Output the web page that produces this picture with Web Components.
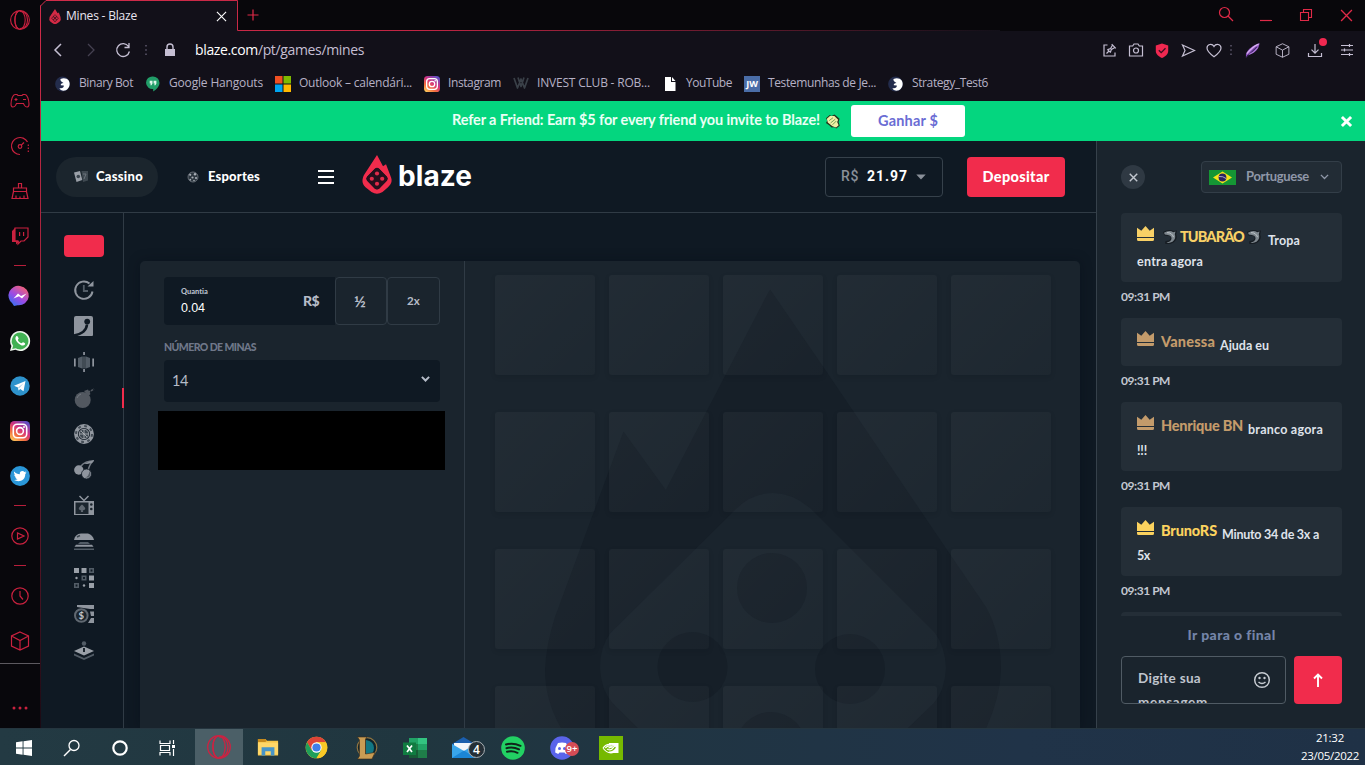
<!DOCTYPE html>
<html lang="pt">
<head>
<meta charset="utf-8">
<title>Mines - Blaze</title>
<style>
html,body{margin:0;height:100%;overflow:hidden;background:#0f1923}
body{font-family:"Lato","Open Sans",sans-serif}
</style>
</head>
<body>
<desk-top></desk-top>
<script>
const ICONS = {
opera:[20,20,'<g fill="none" stroke="currentColor" stroke-width="1.1"><circle cx="10" cy="10" r="9.4"/><ellipse cx="10" cy="10" rx="5.2" ry="9.2"/><path d="M8 1.5C4 4 4 16 8 18.500M10 1.500c6 0 7.500 4 7.500 8.500s-1.500 8.500-7.500 8.500"/></g>'],
gamepad:[20,16,'<g fill="none" stroke="currentColor" stroke-width="1.1"><path d="M5 1.500h2l1 1h4l1-1h2c2 0 4 5 4 9.500 0 4-3 3.500-4.500 1.500l-1-2h-7l-1 2C4 14.500 1 15 1 11 1 6.500 3 1.500 5 1.500z"/><path d="M6 5v3M4.500 6.500h3M13 6.500h3"/></g>'],
gauge:[20,20,'<g fill="none" stroke="currentColor" stroke-width="1.2"><path d="M10 18.500a8.500 8.500 0 1 1 7.500-12.500"/><path d="M18.300 8.500v8" stroke-dasharray="1.500 1.500"/><circle cx="10" cy="10.500" r="1.800"/><path d="M11.300 9.200L14 6.500"/></g>'],
broom:[18,18,'<path d="M7.500 6V1.500h3V6M2.500 9.500V6h13v3.500M2.500 9.500L1 16.500h16l-1.500-7zM5 16.500v-3M9 16.500v-2M13 16.500v-3" fill="none" stroke="currentColor" stroke-width="1.200"/>'],
twitch:[18,18,'<path d="M4 1h13v9l-4 4h-3l-3 3v-3H4z" fill="none" stroke="currentColor" stroke-width="1.200"/><path d="M4 1L1 4v11h4v2.500l3-3-1-1H4zM8 5h1.200v4H8zM12 5h1.200v4H12z" fill="currentColor"/>'],
messenger:[20,20,'<defs><linearGradient id="g" x1="0" y1="1" x2=".7" y2="0"><stop offset="0" stop-color="#1b7cf5"/><stop offset=".5" stop-color="#9a4be6"/><stop offset="1" stop-color="#f0607a"/></linearGradient></defs><path d="M10 0a10 9.600 0 1 1-2.500 19.200L4 20l-2-3A9.700 9.700 0 0 1 10 0z" fill="url(#g)"/><path d="M3.500 12.500L8 7.500l3 2.500 5.500-2.500-4.500 5-3-2.300z" fill="#fff"/>'],
whatsapp:[20,20,'<path d="M10 0a10 10 0 1 1-4.600 18.800L0 20l1.400-5A10 10 0 0 1 10 0z" fill="#eef7ee"/><path d="M10 1.600a8.400 8.400 0 1 1-4.300 15.600L2.200 18l1-3.300A8.400 8.400 0 0 1 10 1.600z" fill="#41b153"/><path d="M6.500 5c-2 1.500-1 4.500 1.500 7s5.500 3.500 7 1.500c.6-1-.2-1.500-1.800-2.200-.8-.3-1 .9-1.700.9C10 12 8 10 7.900 8.900c0-.6 1-.9.700-1.600C8 5.500 7.500 4.600 6.500 5z" fill="#fff"/>'],
telegram:[20,20,'<circle cx="10" cy="10" r="9.700" fill="#2e92cc"/><path d="M4 9.800L15.500 5l-2 10.300-3.300-2.400-1.700 1.700-.5-3.100z" fill="#fff"/><path d="M8 11.500l5.500-4.300-4.300 5z" fill="#a9cbe0"/>'],
insta:[20,20,'<defs><linearGradient id="g" x1=".1" y1="1" x2=".8" y2="0"><stop offset="0" stop-color="#ffd25e"/><stop offset=".3" stop-color="#f2703f"/><stop offset=".6" stop-color="#d3317f"/><stop offset="1" stop-color="#5a50c8"/></linearGradient></defs><rect width="20" height="20" rx="4.500" fill="url(#g)"/><g fill="none" stroke="#fff" stroke-width="1.600"><rect x="3.300" y="3.300" width="13.400" height="13.400" rx="3.800"/><circle cx="10" cy="10" r="3.400"/></g><circle cx="14" cy="6" r="1" fill="#fff"/>'],
twitter:[20,20,'<circle cx="10" cy="10" r="9.900" fill="#2a96d8"/><path d="M4.200 5.500c1.500 1.800 3.300 2.600 5.600 2.700C9.300 5 13 4 14.500 6l1.700-.6-.9 1.600 1.400-.4-1.400 1.500c0 7-6.800 8.500-11.300 6 1.500.1 2.700-.2 3.700-1-1.300-.2-2.100-.8-2.500-1.900h1C4.800 10.500 4.200 9.600 4.200 8.400l1.100.3C4.100 7.800 3.700 6.600 4.200 5.500z" fill="#fff"/>'],
play:[18,18,'<g fill="none" stroke="currentColor" stroke-width="1.200"><circle cx="9" cy="9" r="8.200"/><path d="M6.500 6v6l6.500-3z"/></g>'],
clock:[18,18,'<g fill="none" stroke="currentColor" stroke-width="1.200"><circle cx="9" cy="9" r="8.200"/><path d="M9 4v5l3 3.500"/></g>'],
cube:[20,20,'<path d="M10 1l8.500 4v10L10 19l-8.500-4V5zM1.500 5L10 9.500 18.500 5M10 9.500V19" fill="none" stroke="currentColor" stroke-width="1.200"/>'],
dots3:[16,4,'<g fill="currentColor"><circle cx="2" cy="2" r="1.500"/><circle cx="8" cy="2" r="1.500"/><circle cx="14" cy="2" r="1.500"/></g>'],
flame:[30,40,'<path fill-rule="evenodd" fill="#f12c4c" d="M15 0l6 11.500L24 9.500l4.500 12C31 27 29 30 26 33l-5.500 5q-5.500 3.500-11 0L3.500 33C-.5 29 0 25 2 20.500z M12.800 14q2.200-1.600 4.400 0l7.800 8.300q1.600 2 0 4L17.200 34.500q-2.200 1.600-4.400 0L5 26.300q-1.600-2 0-4z"/><path fill="#250f1c" d="M13 14q2-1.400 4 0l7.800 8.400q1.400 1.800 0 3.600L17 34.400q-2 1.400-4 0L5.200 26q-1.400-1.800 0-3.600z"/><g fill="#e02b4a"><circle cx="15" cy="19" r="2.100"/><circle cx="15" cy="29.500" r="2.100"/><circle cx="9.800" cy="24.300" r="2.100"/><circle cx="20.200" cy="24.300" r="2.100"/></g>'],
favicon:[12,15,'<path fill="#d42a45" d="M6 0l2.600 4.300 1.200-.8 1.700 4.500q1 3-1 4.800L8 14.500q-2 1-4 0L1.500 12.800Q-.5 11 .6 8z"/><path fill="#4a1423" d="M6 5.200l3.800 4L6 13.200l-3.800-4z"/><g fill="#d42a45"><circle cx="6" cy="7.300" r="1"/><circle cx="6" cy="11" r="1"/><circle cx="4.200" cy="9.200" r="1"/><circle cx="7.800" cy="9.200" r="1"/></g>'],
x:[12,12,'<path d="M1 1l10 10M11 1L1 11" stroke="currentColor" fill="none" stroke-width="var(--sw,1.200)"/>'],
plus:[12,12,'<path d="M6 .5v11M.5 6h11" stroke="currentColor" stroke-width="1.200"/>'],
bar:[12,12,'<path d="M0 11.500h12" stroke="currentColor" stroke-width="1.200"/>'],
search:[16,16,'<g fill="none" stroke="currentColor" stroke-width="1.200"><circle cx="6.500" cy="6.500" r="5"/><path d="M10 10l5 5"/></g>'],
restore:[14,14,'<path d="M1.500 4.500h8v8h-8zM4.500 4.500v-3h8v8h-3" fill="none" stroke="currentColor" stroke-width="1.100"/>'],
back:[10,14,'<path d="M8 1L2 7l6 6" fill="none" stroke="currentColor" stroke-width="1.500"/>'],
fwd:[10,14,'<path d="M2 1l6 6-6 6" fill="none" stroke="currentColor" stroke-width="1.300"/>'],
reload:[16,16,'<path d="M13.500 4.500A6.400 6.400 0 1 0 14.400 9.500M14 1v4.500H9.500" fill="none" stroke="currentColor" stroke-width="1.300"/>'],
vdots:[2,12,'<path d="M0 1h2v1.500H0zM0 5.200h2v1.500H0zM0 9.500h2V11H0z" fill="#4b4658"/>'],
lock:[12,14,'<path d="M1 6h10v7H1z" fill="currentColor"/><path d="M3 6V4a3 3 0 0 1 6 0v2" fill="none" stroke="currentColor" stroke-width="1.400"/>'],
pin:[14,14,'<path d="M4.500 2H1v11h11V9.500" fill="none" stroke="currentColor" stroke-width="1.200"/><path d="M3.500 10.500L6 8M4.300 6.300l3.400 3.400M4.800 6.600L7.600 5.600 9.300 2.500M7.400 9.200l1-2.800 3.100-1.700M8.700 1.200l4.100 4.100" fill="none" stroke="currentColor" stroke-width="1.200"/>'],
camera:[16,14,'<g fill="none" stroke="currentColor" stroke-width="1.200"><path d="M1.500 3h3.200L6 1h4l1.300 2h3.200v10h-13z"/><circle cx="8" cy="7.500" r="2.500"/></g>'],
shield:[14,15,'<path d="M7 .5l6.200 2v5.500c0 3.500-3 5.500-6.200 7-3.200-1.500-6.200-3.500-6.200-7V2.500z" fill="#f02850"/><path d="M3.800 7.300l2.400 2.400 4.300-4.400" fill="none" stroke="#3a0d20" stroke-width="1.300"/>'],
send:[15,13,'<path d="M1.500 1L13.500 6.500 1.500 12l2.500-5.500z" fill="none" stroke="currentColor" stroke-width="1.200"/>'],
heart:[16,15,'<path d="M8 13.800C3 10 1 7.500 1 5c0-3.800 5-5 7-1.500C10 0 15 1.200 15 5c0 2.500-2 5-7 8.800z" fill="none" stroke="currentColor" stroke-width="1.200"/>'],
feather:[16,18,'<path d="M1 13C3 7 9 3.500 15.500 1c-.3 6-5 11.500-13 13L1 17z" fill="#8d55bd"/><path d="M2 12.500Q8 5 14.500 2.300" stroke="#d9b2f2" stroke-width="1.300" fill="none"/><path d="M1.500 16L12.500 5.500" stroke="#3d2260" stroke-width="1.100" fill="none"/><path d="M4.500 13.200Q10 11.500 13.500 6" stroke="#b583dc" stroke-width="1" fill="none"/>'],
download:[16,16,'<path d="M1.500 11v3.500h13V11M8 2v9M4.500 7.700L8 11.200l3.500-3.500" fill="none" stroke="currentColor" stroke-width="1.200"/>'],
sliders:[14,14,'<path d="M1 2.500h12M1 7h12M1 11.500h12M9.500 1v3M4.500 5.500v3M9.500 10v3" fill="none" stroke="currentColor" stroke-width="1.200"/>'],
binary:[16,16,'<circle cx="7.500" cy="8" r="7.400" fill="#232c4c"/><path d="M5.500 3C8.500 1.500 12 2.200 13.700 4.500 16 8 14 13.500 10 14.600 7.500 15.200 5 14 4.500 12c2.500.6 4.500-.3 4.300-2.500L5.800 9.200C5.500 8 6.500 7.200 8.500 7 7.500 6 5 5.500 5.500 3z" fill="#fff"/>'],
hangouts:[14,16,'<path d="M7 .5a6.500 6.500 0 0 1 6.500 6.300c0 4-3.500 7-6.300 8.700v-2.500A6.300 6.300 0 1 1 7 .5z" fill="#219d68"/><path d="M3.700 4.800h2.800v2.800L5.500 9.200H4.300l.6-1.600H3.700zM7.600 4.800h2.800v2.800L9.400 9.200H8.200l.6-1.600H7.600z" fill="#dff5ea"/>'],
outlook:[16,16,'<path fill="#f05022" d="M0 0h7.500v7.500H0z"/><path fill="#7fba00" d="M8.500 0H16v7.500H8.500z"/><path fill="#00a4ef" d="M0 8.500h7.500V16H0z"/><path fill="#ffb900" d="M8.500 8.500H16V16H8.500z"/>'],
wletter:[16,14,'<path d="M1 2l3.500 10L8 3l3.500 9L15 2M5 1.500l3 9 3-9" fill="none" stroke="#3a4048" stroke-width="1.700" stroke-linejoin="round"/>'],
doc:[16,16,'<path d="M3 1h6v5h4.500v9H3z" fill="#fff"/><path d="M10 1l3.500 4H10z" fill="#fff"/>'],
money:[16,16,'<path d="M1 4.500L5 1l2 1 3-1.500 2.500 2L15.500 5l-1 3.500 1.200 4L12 15.500 10 14l-3 .5L4.500 12 1 9.500 2.500 7z" fill="#26331c"/><path d="M2 5l3.300-2.800 4.700-.2L14 6l-1 2.500 1.500 3.500-2.700 2.300-3.800-1.300-5-4z" fill="#f1f0a5"/><path d="M4.500 7l4-3M6 9.500l5-4M8 11.500l4-4" stroke="#6c9a52" stroke-width="1"/>'],
cards:[14,12,'<path d="M0 1.500L6 0l2.300 9L2.500 11z" fill="#9aa0a8"/><circle cx="4.300" cy="5.500" r="1.800" fill="#39434c"/><path d="M7.500 0H14v9.500L9 11z" fill="#3f4951"/><path d="M9 3h3l-2 5" stroke="#6c747c" fill="none"/>'],
ball:[12,12,'<circle cx="6" cy="6" r="5" fill="#2c363f" stroke="#6b727b" stroke-width=".9"/><g fill="#a8adb5"><circle cx="3.200" cy="3.800" r="1.100"/><circle cx="8" cy="3.300" r="1.200"/><circle cx="5.500" cy="6.500" r="1.100"/><circle cx="3.300" cy="8.700" r=".9"/><circle cx="9" cy="7" r="1.100"/><circle cx="7" cy="9.500" r=".8"/></g>'],
burger:[16,16,'<path d="M0 1h16v2H0zM0 7h16v2H0zM0 13h16v2H0z" fill="#fff"/>'],
tri:[10,6,'<path d="M.3.500h9.400L5 5.500z" fill="#8a9099"/>'],
chev:[10,6,'<path d="M1 1l4 4 4-4" fill="none" stroke="currentColor" stroke-width="var(--sw,1.200)"/>'],
recent:[20,20,'<path d="M18.500 11.500A8.700 8.700 0 1 1 15.500 3.500" fill="none" stroke="#8f959e" stroke-width="1.900"/><path d="M13.500 6.500h6V1z" fill="#8f959e"/><path d="M9.800 5v6H14" stroke="#525c66" stroke-width="1.800" fill="none"/>'],
crash:[20,20,'<path d="M0 2q0-2 2-2h15q2 0 2 2v17q0 1-1 1H0z" fill="#8f959e"/><path d="M0 19.500C8 18 12.500 14 13 8.500" fill="none" stroke="#0f1923" stroke-width="2.600"/><circle cx="13.200" cy="5.600" r="2.900" fill="#0f1923"/>'],
double:[20,20,'<path d="M0 6.500h1.700v8H0zM18.300 6.500H20v8h-1.700zM9.200 0h1.700v3H9.200zM9.200 17h1.700v3H9.200z" fill="#8f959e"/><path d="M4 6l4-1.500v12L4 15zM12 4.500L16 6v9l-4 1.500z" fill="#525c66"/><path d="M8 4.500h4v12H8z" fill="#414b54"/>'],
bomb:[20,20,'<circle cx="8.700" cy="12" r="8" fill="#525860"/><path d="M10 3l4-1.500L16.500 6l-2 2z" fill="#525860"/><path d="M14 4.500L20 1" stroke="#525860" stroke-width="1.600" stroke-dasharray="2.500 .8"/><path d="M3 10q1-3 4-4" stroke="#737981" fill="none"/>'],
roulette:[20,20,'<circle cx="10" cy="10" r="8" fill="none" stroke="#9399a1" stroke-width="3.800"/><circle cx="10" cy="10" r="8" fill="none" stroke="#454e57" stroke-width="2" stroke-dasharray="2.800 3.480"/><circle cx="10" cy="10" r="4.800" fill="#3d4750" stroke="#9399a1"/><path d="M10 5.200v9.600M5.200 10h9.600M7 7l6 6" stroke="#b5b9be" stroke-width=".8"/>'],
cherry:[20,20,'<path d="M7 6Q11 1 20 .8M14 11Q15 5 19 1" fill="none" stroke="#737a83" stroke-width="1.500"/><path d="M10 3.500L20 0l-2 3-5 1z" fill="#8f959e"/><circle cx="4.800" cy="10" r="4.700" fill="#8f959e"/><circle cx="12.500" cy="14" r="5" fill="#8f959e" stroke="#0f1923" stroke-width=".8"/><path d="M15.500 11q2 3-.5 6.500h-4q4-1 4.500-6.500z" fill="#545c65"/>'],
tv:[20,20,'<path d="M5.500 0L10 4.500 14.500 0" fill="none" stroke="#8f959e" stroke-width="1.500"/><path d="M0 5h20v14H0z" fill="#8f959e"/><path d="M1.500 6.500h13V18h-13z" fill="#1b252e"/><circle cx="17.300" cy="8.500" r="1.300" fill="#1b252e"/><circle cx="17.300" cy="13" r="1.300" fill="#1b252e"/><path d="M8 8.500q6 5 .8 6l.4 1.500H6.800l.4-1.500Q2 13.500 8 8.500z" fill="#606871"/>'],
air:[20,20,'<path d="M0 8Q1 2 7 1.500h7Q19 3 20 8z" fill="#8f959e"/><path d="M3 5l3-1.500" stroke="#3a444d" stroke-width="1.500"/><path d="M6 10h8l2 2H4z" fill="#525c66"/><path d="M2 12.800h16l1.500 2H.5z" fill="#8f959e"/><path d="M0 16.500h20V18H0z" fill="#525c66"/>'],
keno:[20,20,'<g fill="#9aa0a8"><path d="M0 0h5v5H0zM7.500 0h5v5h-5zM15 7.500h5v5h-5zM15 15h5v5h-5z"/><circle cx="2.500" cy="10" r="1.200"/><circle cx="10" cy="17.500" r="1.200"/></g><g fill="none" stroke="#525c66" stroke-width="1.600"><path d="M15.800.8h3.400v3.400h-3.400zM8.300 8.300h3.400v3.400H8.300zM.8 15.800h3.400v3.400H.8z"/></g>'],
coins:[20,20,'<path d="M3 1h17v4h-4L3 3zM16 7.500h4v4.500h-3zM17 14h3v5h-6z" fill="#8f959e"/><circle cx="7.300" cy="11.500" r="6.300" fill="#1b252e" stroke="#606871" stroke-width="2"/>','$'],
joy:[20,20,'<circle cx="10" cy="3.500" r="2.200" fill="#525c66"/><path d="M10 6.500L20 11 10 15.500 0 11z" fill="#9aa0a8"/><path d="M9 8h2v4H9z" fill="#1b252e"/><path d="M0 13.500L10 18l10-4.500v2L10 20 0 15.500z" fill="#525c66"/>'],
crown:[17,15,'<path d="M0 1.800l4.300 3L8.500 0l4.200 4.800 4.300-3V11H0zM0 12h17v1.500q0 1.500-1.500 1.500h-14Q0 15 0 13.500z" fill="currentColor"/>'],
shark:[14,14,'<path d="M0 2Q6-1.500 10.500 1L14 .5l-.8 4Q15 9 10.500 12.500 6 15 2 13.500l.5-2.500L6 10.500Q9 8 6.500 6L1.500 5.500z" fill="#161c22"/><path d="M1 2.800Q6-.3 10.300 2.200l2.200-.6-.7 2.700Q13.500 8.500 9.500 11.800 6.500 13.500 3.500 12.700q4.500-1.200 5-4Q9 5 1.800 4.500z" fill="#7d868d"/><path d="M4 2.600q5 0 6.500 4.500" stroke="#cdd2d6" fill="none" stroke-width=".8"/>'],
flag:[27,15,'<path d="M0 0h27v15H0z" fill="#159634"/><path d="M13.500 1.500L23 7.500l-9.500 6-9.500-6z" fill="#f6e31b"/><circle cx="13.500" cy="7.500" r="3.900" fill="#2b2360"/><path d="M10 6.500q4-.5 7 2" stroke="#c8cbe0" fill="none" stroke-width=".8"/>'],
smile:[18,18,'<g fill="none" stroke="#c5cad0" stroke-width="1.500"><circle cx="9" cy="9" r="7.300"/><path d="M5.500 11q3.500 3 7 0"/></g><circle cx="6.500" cy="7" r="1.200" fill="#c5cad0"/><circle cx="11.500" cy="7" r="1.200" fill="#c5cad0"/>'],
up:[10,14,'<path d="M5 14V2.500M1 5.500l4-4 4 4" fill="none" stroke="#fff" stroke-width="1.900"/>'],
win:[16,16,'<path d="M0 2.300L6.600 1.300v6.300H0zM7.500 1.200L16 0v7.600H7.500zM0 8.500h6.600v6.300L0 13.800zM7.500 8.500H16V16l-8.500-1.200z" fill="#fff"/>'],
find:[18,18,'<circle cx="11" cy="6.500" r="5" fill="none" stroke="#fff" stroke-width="1.300"/><path d="M7.500 10.500L1 17" stroke="#fff" stroke-width="1.500"/>'],
ring:[16,16,'<circle cx="8" cy="8" r="6.700" fill="none" stroke="#fff" stroke-width="2.200"/>'],
task:[18,16,'<path d="M1 .5v3h10v-3M1 15.500v-3h10v3M1.500 5.500h9v5h-9zM14.500 0v4M14.500 9v7" fill="none" stroke="#fff" stroke-width="1.200"/><path d="M13 5h3v3h-3z" fill="#fff"/>'],
folder:[24,20,'<path d="M1 1h8l2 2h12v16H1z" fill="#f6c64a"/><path d="M1 1h8l2 2-2 1.500H1z" fill="#c68a1d"/><path d="M1 5h22v13H1z" fill="#ffd768"/><path d="M5 19v-9h14v9h-4v-4.500H9V19z" fill="#4795c8"/>'],
chrome:[24,24,'<circle cx="12" cy="12" r="11.300" fill="#f9c926"/><path d="M2.200 6.400A11.300 11.300 0 0 1 21.800 6.400H12L7 15z" fill="#dd4437"/><path d="M2.200 6.400A11.300 11.300 0 0 0 12 23.300l5-8.500-10 0z" fill="#1f9f5a"/><path d="M21.800 6.400H12l5 8.400-5 8.500A11.300 11.300 0 0 0 21.800 6.400z" fill="#f9c926"/><circle cx="12" cy="12" r="5.400" fill="#fff"/><circle cx="12" cy="12" r="4.300" fill="#3f7fe8"/>'],
lol:[24,24,'<circle cx="13" cy="11.500" r="9.800" fill="#10252d" stroke="#8f7341" stroke-width="1.200"/><path d="M12 4q8 1.500 8 8 0 3-2 6h-6z" fill="#127783"/><path d="M3.500 1H13l-1.500 2v15l9.500-1.500-3 6.500H3.500l2-3V4z" fill="#c89c54" stroke="#3a2a16" stroke-width=".6"/>'],
excel:[24,22,'<path d="M6 1h18v20H6z" fill="#1f7d49"/><path d="M6 1h9v6H6z" fill="#21a366"/><path d="M15 1h9v6h-9z" fill="#33c481"/><path d="M15 7h9v6h-9z" fill="#21a366"/><path d="M6 13h9v8H6z" fill="#185c37"/><path d="M0 5.500h13v12.500H0z" fill="#107c41"/><path d="M4 8.500l5 6.500M9 8.500L4 15" stroke="#fff" stroke-width="1.700"/>'],
mail:[26,24,'<path d="M1 8L12.500 1 24 8v14H1z" fill="#1b5fae"/><path d="M3 7h19v10H3z" fill="#f2f6fb"/><path d="M1 8l12 7L24 8v14H1z" fill="#39a5ea"/><path d="M1 22L13 14.500 24 22z" fill="#1b86d6"/>'],
spotify:[24,24,'<circle cx="12" cy="12" r="11.800" fill="#22d163"/><path d="M5 8.500q7-2.200 14.500 1.300M5.500 12.200q6.500-1.800 12.500 1.200M6 15.800q5.500-1.500 10.500 1" fill="none" stroke="#10251a" stroke-width="2" stroke-linecap="round"/>'],
discord:[24,24,'<circle cx="12" cy="12" r="11.800" fill="#5a64ea"/><path d="M8 7q4-1 8 0l2.500 5 .3 4.500-3 1.500-1.300-1.500h-5L8.200 18l-3-1.500.3-4.500z" fill="#fff"/><circle cx="9.500" cy="12.500" r="1.500" fill="#5a64ea"/><circle cx="14.500" cy="12.500" r="1.500" fill="#5a64ea"/>'],
nvidia:[24,24,'<path d="M0 0h24v24H0z" fill="#76b900"/><path d="M10 7h9.500v10H10z" fill="#fff"/><path d="M10 8.500q4.500-.3 7 3-3 4.300-7 4z" fill="#76b900"/><path d="M4 12Q9 5.500 16.500 11M4 12q4 6 10.500 4.500M6.300 12Q10 8 14.500 11.500 12 15.500 8 13M9.500 12.300q2-1.800 3.200-.3" fill="none" stroke="#fff" stroke-width="1.200"/>']
};
ICONS.insta16 = [16,16,`<g transform="scale(.8)">${ICONS.insta[2]}</g>`];

const def = (name, html, init) => customElements.define(name, class extends HTMLElement {
  connectedCallback(){
    if (this.shadowRoot) return;
    const root = this.attachShadow({mode:'open'});
    const t = document.createElement('template');
    t.innerHTML = typeof html === 'function' ? html(this) : html;
    root.append(t.content.cloneNode(true));
    if (init) init(this, root);
  }
});

def('x-icon', el => {
  const [w,h,body,label] = ICONS[el.getAttribute('name')];
  const W = +el.getAttribute('w') || w, H = +el.getAttribute('h') || h * W / w;
  return `<style>:host{display:inline-flex;flex:none;align-items:center;justify-content:center;box-sizing:border-box}svg{display:block;overflow:visible}</style>
  <svg width="${W}" height="${H}" viewBox="0 0 ${w} ${h}" preserveAspectRatio="none">${body}${label?`<text x="7.300" y="15" text-anchor="middle" font-family="Lato" font-weight="700" font-size="9.500" fill="#c5c8cd">${label}</text>`:''}</svg>`;
});

/* Single-line label: tracks its letters so that the text fills the width given in "w". */
def('x-label', `<style>:host{display:inline-block;flex:none;white-space:pre;line-height:1.2}</style><span><slot></slot></span>`, (el, root) => {
  const w = +el.getAttribute('w'), s = root.querySelector('span');
  if (!w) return;
  el.style.width = w + 'px';
  const n = el.textContent.length;
  s.style.letterSpacing = ((w - s.getBoundingClientRect().width) / n).toFixed(3) + 'px';
});

def('side-bar', `<style>
:host{display:flex;flex-direction:column;width:41px;height:728px;background:#08070c;color:#c9213f;box-sizing:border-box}
x-icon{height:45px;width:40px}
.top{height:40px;margin-bottom:38px}
i{display:block;flex:none;width:12px;height:1px;margin:7px 14px;background:#b81e3b}
hr{margin:0;border:0;flex:none;width:40px;height:1px;background:#5c5960}
.more{height:64px;padding-top:24px}
</style>
<x-icon class="top" name="opera"></x-icon>
<x-icon name="gamepad"></x-icon><x-icon name="gauge"></x-icon><x-icon name="broom"></x-icon><x-icon name="twitch"></x-icon>
<i></i>
<x-icon name="messenger"></x-icon><x-icon name="whatsapp"></x-icon><x-icon name="telegram"></x-icon><x-icon name="insta"></x-icon><x-icon name="twitter"></x-icon>
<i></i><x-icon name="play"></x-icon><i></i>
<x-icon name="clock"></x-icon><x-icon name="cube"></x-icon>
<hr><x-icon class="more" name="dots3"></x-icon>`);

def('tab-strip', `<style>
:host{display:flex;height:31px;background:#08070b;font:12px "Open Sans","Noto Sans",sans-serif;color:#e02a48}
.tab{display:flex;align-items:center;width:197px;height:31px;box-sizing:border-box;padding:1px 0 0 8px;background:#121019;color:#e8e4f0;clip-path:polygon(5px 0,100% 0,100% 100%,0 100%,0 5px)}
.tab x-label{margin-left:5px}
.tab .c{margin-left:79px;color:#fff}
.sp{flex:1}
.b{width:40px;height:30px}
.e{margin-right:-1px}
.p{width:29px;height:30px;padding-left:1px}
</style>
<div class="tab"><x-icon name="favicon" w="12"></x-icon><x-label w="71">Mines - Blaze</x-label><x-icon class="c" name="x" w="11"></x-icon></div>
<x-icon class="p" name="plus"></x-icon><div class="sp"></div>
<x-icon class="b" name="search" style="height:28px"></x-icon><x-icon class="b" name="bar"></x-icon><x-icon class="b" name="restore"></x-icon><x-icon class="b e" name="x" w="13"></x-icon>`);

def('address-bar', `<style>
:host{display:flex;align-items:center;height:38px;background:#121019;color:#c5bfd3;font:14px "Open Sans","Noto Sans",sans-serif}
.sp{flex:1}
b{font-weight:400;color:#fff}
.dl{position:relative;width:40px;display:flex;justify-content:center}
.dl::after{content:"";position:absolute;left:24px;top:-4px;width:8px;height:8px;border-radius:50%;background:#f02850}
</style>
<x-icon name="back" style="width:33px"></x-icon><x-icon name="fwd" style="width:33px;color:#454151"></x-icon><x-icon name="reload" style="width:32px"></x-icon><x-icon name="vdots" style="width:13px"></x-icon><x-icon name="lock" style="width:36px"></x-icon>
<x-label w="169" style="margin-left:7px"><b>blaze.com</b>/pt/games/mines</x-label><div class="sp"></div>
<x-icon name="pin" style="width:26px"></x-icon><x-icon name="camera" style="width:26px"></x-icon><x-icon name="shield" style="width:26px"></x-icon><x-icon name="send" style="width:26px"></x-icon><x-icon name="heart" style="width:26px"></x-icon><x-icon name="vdots" style="width:8px"></x-icon>
<x-icon name="feather" style="width:34px" w="15"></x-icon><x-icon name="cube" w="15" style="width:26px"></x-icon><div class="dl"><x-icon name="download"></x-icon></div><x-icon name="sliders" style="width:24px;margin-right:6px"></x-icon>`);

def('book-mark', el => `<style>:host{display:flex;align-items:center;gap:8px}x-icon{width:16px}.jw{width:16px;height:16px;background:#4a6da7;color:#fff;font:700 9px/16px "Open Sans",sans-serif;text-align:center}</style>
${el.getAttribute('icon')==='jw'?'<span class="jw">JW</span>':`<x-icon name="${el.getAttribute('icon')}"></x-icon>`}<x-label w="${el.getAttribute('w')}">${el.textContent}</x-label>`);

def('bookmark-bar', `<style>:host{display:flex;align-items:center;gap:12px;height:32px;padding:0 0 3px 14px;background:#121019;color:#b6b0c5;font:12px "Open Sans","Noto Sans",sans-serif;box-sizing:border-box}</style>
<book-mark icon="binary" w="54">Binary Bot</book-mark><book-mark icon="hangouts" w="94">Google Hangouts</book-mark><book-mark icon="outlook" w="113">Outlook – calendári...</book-mark><book-mark icon="insta16" w="53">Instagram</book-mark><book-mark icon="wletter" w="113">INVEST CLUB - ROB...</book-mark><book-mark icon="doc" w="46">YouTube</book-mark><book-mark icon="jw" w="108">Testemunhas de Je...</book-mark><book-mark icon="binary" w="76">Strategy_Test6</book-mark>`);

def('promo-banner', `<style>
:host{display:flex;align-items:center;height:40px;background:#04d67f;color:#eafff5;font-weight:700;padding-left:411px;box-sizing:border-box}
a{display:flex;align-items:center;justify-content:center;width:114px;height:32px;border-radius:3px;background:#fff;color:#6a6cd4;margin-left:11px;font-size:14.500px}
.sp{flex:1}
</style><x-label w="368" style="font-size:14.500px;margin-top:-2px">Refer a Friend: Earn $5 for every friend you invite to Blaze!</x-label><x-icon name="money" w="15" style="margin-left:5px"></x-icon><a><x-label w="60">Ganhar $</x-label></a><div class="sp"></div><x-icon name="x" w="11" style="--sw:3.200;margin-right:13px;color:#fff"></x-icon>`);

def('site-header', `<style>
:host{display:flex;align-items:center;height:72px;box-sizing:border-box;border-bottom:1px solid #303b45;padding:0 31px 0 15px;color:#fff;font-weight:900}
.pill{display:flex;align-items:center;gap:8px;box-sizing:border-box;width:102px;height:40px;border-radius:20px;background:#1b252d;padding-left:18px;font-size:13px}
.esp{display:flex;align-items:center;gap:9px;margin-left:29px;font-size:13px}
.bal{display:flex;align-items:center;width:118px;height:40px;box-sizing:border-box;border:1px solid #36414b;border-radius:4px;padding-left:15px;font:500 14px Roboto,sans-serif;color:#8a9099}
.bal b{color:#fff;font-weight:700}
.dep{display:flex;align-items:center;justify-content:center;margin-left:24px;width:98px;height:40px;border-radius:4px;background:#f12c4c;font-size:14.500px}
.sp{flex:1}
.logo{font:700 28px/34px Inter,Lato,sans-serif;margin:-2px 0 0 6px}
</style>
<div class="pill"><x-icon name="cards"></x-icon><x-label w="47">Cassino</x-label></div>
<div class="esp"><x-icon name="ball"></x-icon><x-label w="52">Esportes</x-label></div>
<x-icon name="burger" style="margin-left:58px"></x-icon><x-icon name="flame" w="30" h="39" style="margin:-5px 0 0 28px"></x-icon><x-label class="logo" w="74">blaze</x-label><div class="sp"></div>
<div class="bal"><x-label w="18">R$</x-label><b><x-label w="41" style="margin-left:8px">21.97</x-label></b><x-icon name="tri" style="margin-left:8px"></x-icon></div>
<div class="dep"><x-label w="67">Depositar</x-label></div>`);

def('game-nav', `<style>
:host{display:flex;flex-direction:column;align-items:center;width:83px;flex:none;box-sizing:border-box;border-right:1px solid #303b45;padding:22px 0 0 4px}
.r{width:40px;height:22px;border-radius:4px;background:#f12c4c;margin-bottom:15px}
x-icon{height:36px}
.on{position:relative;display:flex;width:100%;justify-content:center}
.on::after{content:"";position:absolute;right:-1px;top:8px;width:2px;height:20px;background:#f12c4c}
</style><div class="r"></div><x-icon name="recent"></x-icon><x-icon name="crash"></x-icon><x-icon name="double"></x-icon><div class="on"><x-icon name="bomb"></x-icon></div><x-icon name="roulette"></x-icon><x-icon name="cherry"></x-icon><x-icon name="tv"></x-icon><x-icon name="air"></x-icon><x-icon name="keno"></x-icon><x-icon name="coins"></x-icon><x-icon name="joy"></x-icon>`);

def('bet-panel', `<style>
:host{display:block;width:325px;flex:none;box-sizing:border-box;border-right:1px solid #303b45;padding:16px 0 0 24px;color:#b6bcc8;font-weight:700}
.row{display:flex;width:276px;height:48px}
.in{display:flex;align-items:center;justify-content:space-between;width:171px;box-sizing:border-box;background:#0f1923;border-radius:4px 0 0 4px;padding:0 16px 0 17px}
.in div{display:flex;flex-direction:column;gap:5px}
.v{font:12.500px/15px "Liberation Sans",sans-serif;color:#fff}
.q{display:flex;align-items:center;justify-content:center;flex:none;box-sizing:border-box;width:52px;border:1px solid #303b45;border-radius:4px}
.l{font-size:10.500px;color:#6f7789;margin-top:16px;display:block;font-weight:900}
.sel{display:flex;align-items:center;justify-content:space-between;width:276px;height:42px;box-sizing:border-box;background:#0f1923;border-radius:4px;padding:0 10px 0 8px;margin-top:6px;font-weight:400;font-size:14.500px}
.blk{width:287px;height:59px;background:#000;margin:9px 0 0 -6px}
</style>
<div class="row"><div class="in"><div><x-label w="27" style="font-size:7.500px;line-height:9px;font-weight:900">Quantia</x-label><x-label class="v" w="24">0.04</x-label></div><x-label w="16" style="font-size:14px;font-weight:900">R$</x-label></div><div class="q"><x-label w="14" style="font-size:16px">½</x-label></div><div class="q" style="width:53px"><x-label w="13" style="font-size:11.500px">2x</x-label></div></div>
<x-label class="l" w="92">NÚMERO DE MINAS</x-label>
<div class="sel"><x-label w="16">14</x-label><x-icon name="chev" w="9" style="--sw:2.200;margin-top:-4px"></x-icon></div>
<div class="blk"></div>`);

def('mine-board', `<style>
:host{display:grid;position:relative;flex:1;grid-template-columns:repeat(5,100px);grid-auto-rows:100px;column-gap:14px;row-gap:37px;padding:14px 0 0 30px;overflow:hidden}
.t{border-radius:3px;background:linear-gradient(135deg,rgba(255,255,255,.034),rgba(255,255,255,.014));box-shadow:0 2px 5px rgba(10,18,26,.13);position:relative}
svg{position:absolute;left:0;top:0}
</style>
<svg width="615" height="467" viewBox="465 261 615 467"><path fill="#161f28" fill-rule="evenodd" d="M770.500 290 822 365 950.500 555 986 607Q1001 634 1001 670 1000 700 983 735L970 765H580L561 728Q545 700 545 670 546 645 555 617L623.500 431.500 665.800 490 768 293Q770.500 289 770.500 290zM737 508 610.500 633Q600 646 600 668 601 690 612.500 703L660 750H885L934 703Q945 690 946 668 945 646 935 633L810 508Q792 493 773 493 753 493 737 508z"/><g fill="#161f28"><circle cx="772" cy="588" r="35"/><circle cx="692.500" cy="667" r="35"/><circle cx="850" cy="669" r="35"/><circle cx="771" cy="747" r="35"/></g></svg>
${'<div class="t"></div>'.repeat(20)}`);

def('game-card', `<style>:host{display:flex;width:940px;height:467px;margin:48px 0 0 16px;background:#1a242d;border-radius:5px 5px 0 0;box-shadow:0 0 12px rgba(5,12,20,.35)}</style><bet-panel></bet-panel><mine-board></mine-board>`);

def('chat-message', el => {
  const a = n => el.getAttribute(n), s = a('shark') !== null;
  const sh = s ? '<x-icon name="shark" w="14" style="margin-bottom:1px"></x-icon>' : '';
  return `<style>
:host{display:block;color:#dfe2ea;font-weight:700;font-size:12.500px}
.m{box-sizing:border-box;border-radius:4px;background:#242e37;padding:11px 0 0 16px;min-height:48px}
.m.two{height:69px}
.r{display:flex;height:25px;align-items:flex-start}
.n{display:flex;align-items:center;gap:3px;height:26px;color:${a('color')};font-size:14.500px;margin-left:${s?9:7}px;font-weight:900}
.x{line-height:21px;margin:6px 0 0 5px}
.x.s{margin-left:7px}
.y{display:block;line-height:21px;margin-top:2px}
.t{display:flex;align-items:center;height:36px;box-sizing:border-box;padding-bottom:6px;color:#c2c7d0;font-size:12px;font-weight:700}
</style>
<div class="m ${a('l2')?'two':''}"><div class="r"><x-icon name="crown" style="color:${a('color')};margin-top:2px"></x-icon><span class="n">${sh}<x-label w="${a('nw')}">${a('name')}</x-label>${sh}</span><x-label class="x ${s?'s':''}" w="${a('tw')}">${a('l1')}</x-label></div>${a('l2')?`<x-label class="y" w="${a('lw')}">${a('l2')}</x-label>`:''}</div>
<div class="t"><x-label w="49">09:31 PM</x-label></div>`;
});

def('chat-panel', `<style>
:host{display:flex;flex-direction:column;width:269px;flex:none;box-sizing:border-box;border-left:1px solid #36414b;background:#1a242d;padding:20px 23px 0 24px}
.h{display:flex;justify-content:space-between;align-items:center;height:32px}
.c{width:24px;height:24px;border-radius:50%;background:#2f3943;color:#c2c7cf}
.lang{display:flex;align-items:center;width:141px;height:32px;box-sizing:border-box;border:1px solid #333e48;border-radius:4px;background:#222c35;padding-left:7px;color:#8f97a8;font-size:13px;font-weight:700}
.list{height:403px;margin-top:20px;overflow:hidden}
.stub{height:4px;border-radius:4px 4px 0 0;background:#242e37}
.go{align-self:center;color:#7484a8;font-size:14px;font-weight:900;margin-top:11px}
.f{display:flex;gap:8px;margin-top:12px}
.in{display:flex;width:165px;height:48px;box-sizing:border-box;border:1px solid #505b64;border-radius:4px;overflow:hidden;padding:9px 0 0 16px;font-size:13.500px;font-weight:700;color:#c0c5cd}
.in div{width:115px;height:38px;overflow:hidden}
.in x-label{display:block;line-height:24px}
.s{width:48px;height:48px;border-radius:4px;background:#f12c4c}
</style>
<div class="h"><x-icon class="c" name="x" w="9" style="--sw:1.900"></x-icon><div class="lang"><x-icon name="flag"></x-icon><x-label w="63" style="margin-left:10px">Portuguese</x-label><x-icon name="chev" w="9" style="--sw:1.500;margin-left:11px"></x-icon></div></div>
<div class="list">
<chat-message shark color="#f8d066" name="TUBARÃO" nw="64" l1="Tropa" tw="32" l2="entra agora" lw="66"></chat-message>
<chat-message color="#c39b6b" name="Vanessa" nw="54" l1="Ajuda eu" tw="49"></chat-message>
<chat-message color="#c39b6b" name="Henrique BN" nw="82" l1="branco agora" tw="75" l2="!!!" lw="10"></chat-message>
<chat-message color="#fbd25e" name="BrunoRS" nw="56" l1="Minuto 34 de 3x a" tw="97" l2="5x" lw="13"></chat-message>
<div class="stub"></div>
</div>
<x-label class="go" w="88">Ir para o final</x-label>
<div class="f"><div class="in"><div><x-label w="63">Digite sua</x-label><x-label w="70">mensagem</x-label></div><x-icon name="smile" style="height:28px"></x-icon></div><x-icon class="s" name="up"></x-icon></div>`);

def('blaze-site', `<style>:host{display:flex;height:587px;background:#0f1923}.m{flex:1;min-width:0}.b{display:flex;height:515px}</style><div class="m"><site-header></site-header><div class="b"><game-nav></game-nav><game-card></game-card></div></div><chat-panel></chat-panel>`);

def('task-bar', `<style>
:host{display:flex;align-items:center;height:37px;background:linear-gradient(90deg,#233a43,#20363f 30%,#203348 75%,#1f3146);color:#fff;font:12px "Open Sans","Noto Sans",sans-serif;padding-top:1px;box-sizing:border-box;border-top:1px solid #25353f}
.a{width:48px}.o{width:49px;height:100%;position:relative;display:flex;align-items:center;justify-content:center}
.on{background:#4b5f67;width:48px;margin:-1px 0 0 3px;color:#cb2342;height:37px}
.sp{flex:1}
.t{display:flex;flex-direction:column;align-items:center;gap:3px;margin:-2px 6px 0 0}
.t x-label{line-height:15px;font-size:11.500px}
em{position:absolute;font:600 11px/15px "Open Sans",sans-serif;width:15px;height:15px;border-radius:50%;text-align:center}
.k{left:29px;top:11px;background:#252f36;border:1px solid #a8b0b4;font-size:12px}
.d{left:28px;top:12px;width:14px;height:14px;line-height:14px;background:#d54c55;font-size:9.500px}
</style>
<x-icon class="a" name="win"></x-icon><x-icon class="a" name="find"></x-icon><x-icon class="a" name="ring"></x-icon><x-icon class="a" name="task"></x-icon>
<div class="o on"><x-icon name="opera" w="24"></x-icon></div>
<x-icon class="o" name="folder" w="22"></x-icon><x-icon class="o" name="chrome" w="23"></x-icon><x-icon class="o" name="lol"></x-icon><x-icon class="o" name="excel"></x-icon><div class="o"><x-icon name="mail"></x-icon><em class="k">4</em></div><x-icon class="o" name="spotify"></x-icon><div class="o"><x-icon name="discord"></x-icon><em class="d">9+</em></div><x-icon class="o" name="nvidia"></x-icon>
<div class="sp"></div><div class="t"><x-label w="28">21:32</x-label><x-label w="58">23/05/2022</x-label></div>`);

def('desk-top', `<style>
:host{display:grid;position:relative;grid-template:728px 37px / 41px 1fr;width:1365px;height:765px;overflow:hidden}
task-bar{grid-column:1/3}
svg{position:absolute;left:0;top:0;pointer-events:none}
</style><side-bar></side-bar><div><tab-strip></tab-strip><address-bar></address-bar><bookmark-bar></bookmark-bar><promo-banner></promo-banner><blaze-site></blaze-site></div><task-bar></task-bar>
<svg width="1365" height="728"><defs><linearGradient id="v" gradientUnits="userSpaceOnUse" x1="0" y1="0" x2="0" y2="728"><stop offset="0" stop-color="#d22c4a"/><stop offset=".55" stop-color="#8a1f35"/><stop offset="1" stop-color="#1a0a14"/></linearGradient><linearGradient id="h" gradientUnits="userSpaceOnUse" x1="40" y1="0" x2="1000" y2="0"><stop offset="0" stop-color="#d22c4a"/><stop offset=".4" stop-color="#c02543"/><stop offset="1" stop-color="#121019"/></linearGradient></defs>
<path d="M40.500 728V5.500" stroke="url(#v)"/><path d="M40.500 6L46 .5H237.500V30.500H1000" fill="none" stroke="url(#h)"/></svg>`);
</script>
</body>
</html>
